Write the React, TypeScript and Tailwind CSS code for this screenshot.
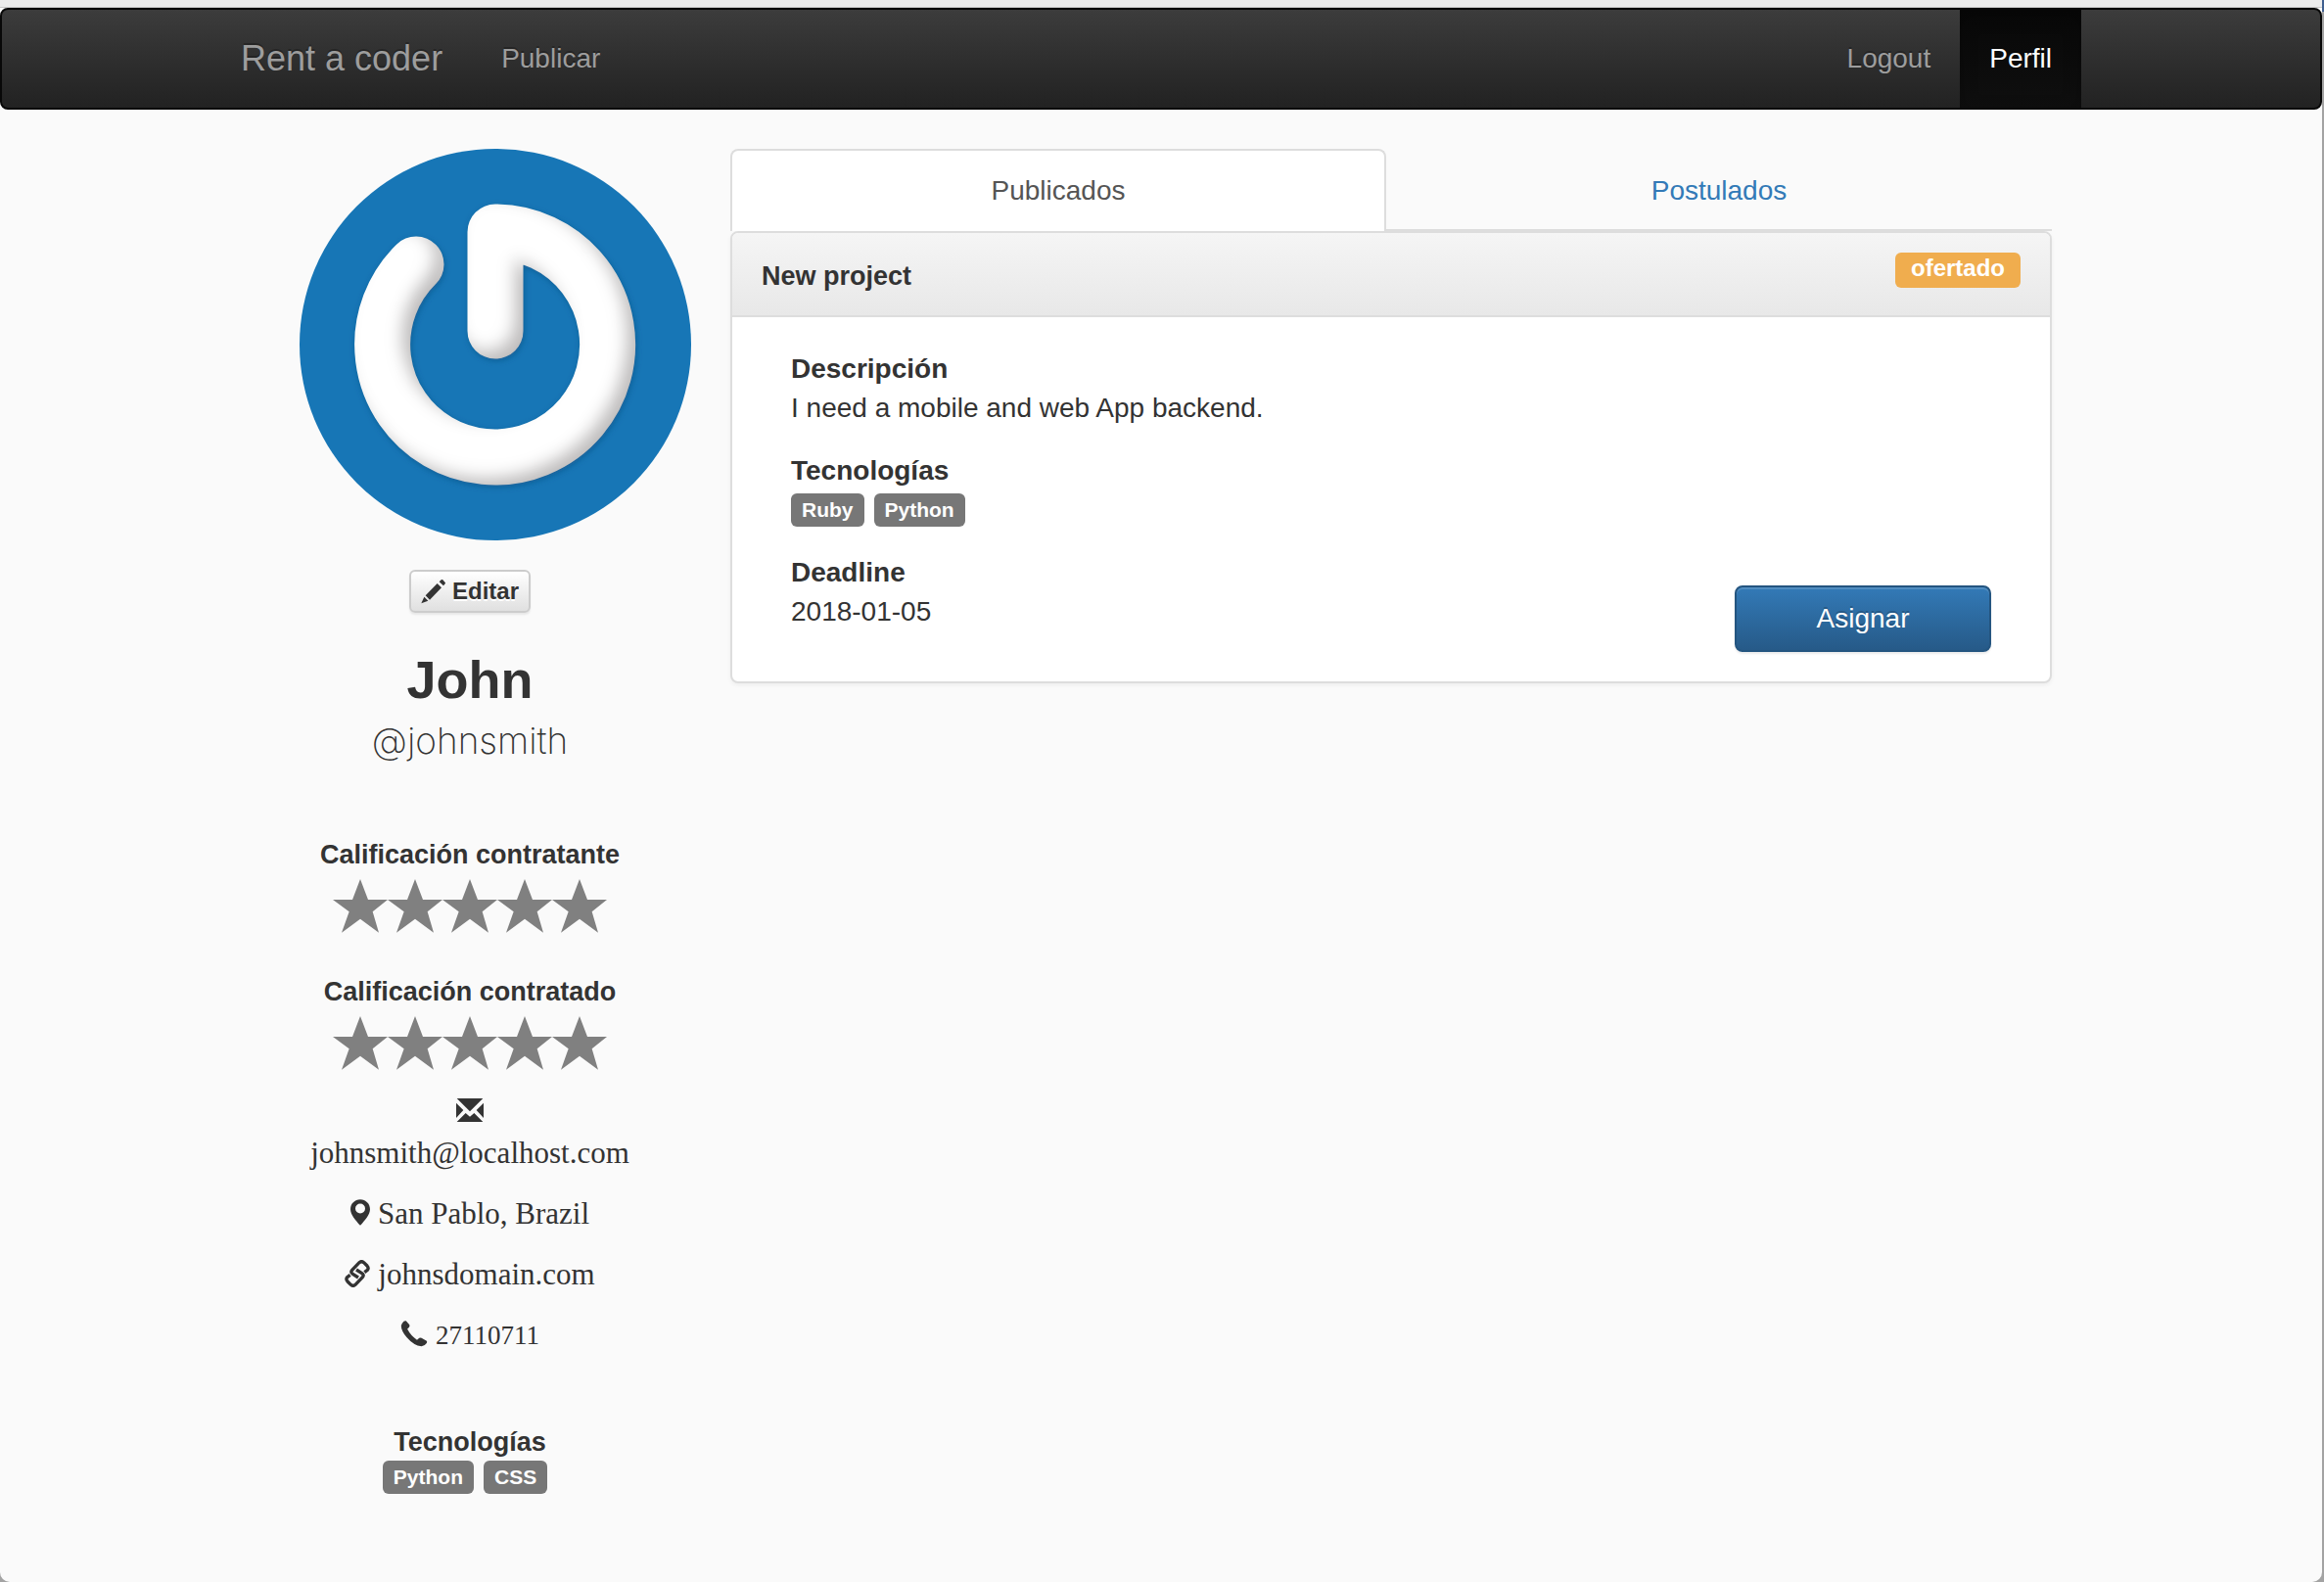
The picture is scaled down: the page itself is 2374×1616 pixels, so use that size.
import type { ReactNode } from 'react';

function Avatar() {
  const power = 'M200 186V85A115 115 0 1 1 119 118';
  return (
    <svg viewBox="0 0 400 400" className="ml-[30px] block w-[400px] max-w-none rounded-full" role="img" aria-label="John">
      <defs>
        <filter id="soft" x="-20%" y="-20%" width="140%" height="140%">
          <feGaussianBlur stdDeviation="10" />
        </filter>
        <filter id="glow" x="-20%" y="-20%" width="140%" height="140%">
          <feGaussianBlur stdDeviation="3" />
        </filter>
        <mask id="powerMask" maskUnits="userSpaceOnUse" x="0" y="0" width="400" height="400">
          <path d={power} fill="none" stroke="#fff" strokeWidth="57" strokeLinecap="round" strokeLinejoin="round" />
        </mask>
      </defs>
      <rect width="400" height="400" fill="#1776b6" />
      <g fill="none" strokeLinecap="round" strokeLinejoin="round">
        <path d={power} stroke="#0f4f80" strokeOpacity="0.6" strokeWidth="57" filter="url(#glow)" transform="translate(1 2)" />
        <g mask="url(#powerMask)">
          <rect width="400" height="400" fill="#bcbaba" />
          <path d={power} stroke="#fff" strokeWidth="60" filter="url(#soft)" transform="translate(-11 -9)" />
          <path d={power} stroke="#fff" strokeWidth="30" filter="url(#soft)" transform="translate(-7 -6)" />
        </g>
      </g>
    </svg>
  );
}

function Pencil() {
  return (
    <svg viewBox="0 0 75 75" className="h-[25px] w-[25px]" fill="currentColor" aria-hidden="true">
      <path d="M56 7L62 1Q64-1 67 1L74 9Q76 11 74 13L69 19ZM50 12L63 25L27 62L14 49ZM10 53L22 65L1 73Z" />
    </svg>
  );
}

function Envelope() {
  return (
    <svg viewBox="0 0 84 72" className="h-6 w-7" fill="currentColor" aria-hidden="true">
      <path d="M2 0H82L42 40ZM2 72L29 45L42 56L55 45L82 72ZM0 14L22 36L0 60ZM84 14L62 36L84 60Z" />
    </svg>
  );
}

function Pin() {
  return (
    <svg viewBox="0 0 60 80" className="h-[27px] w-5" fill="currentColor" aria-hidden="true">
      <path fillRule="evenodd" d="M30 0C47 0 60 13 60 30C60 47 44 64 30 80C16 64 0 47 0 30C0 13 13 0 30 0ZM30 13A15 15 0 1 0 30 43A15 15 0 1 0 30 13Z" />
    </svg>
  );
}

function Chain() {
  return (
    <svg viewBox="0 0 76 84" className="h-7 w-[26px]" fill="none" stroke="currentColor" strokeWidth="10" aria-hidden="true">
      <path d="M41 54L24 43Q16 38 22 31L44 8Q51 2 58 8L68 18Q74 25 69 31L60 38" />
      <path d="M35 30L52 41Q60 46 54 53L32 76Q25 82 18 76L8 66Q2 59 7 53L16 46" />
    </svg>
  );
}

function Phone() {
  return (
    <svg viewBox="0 0 82 82" className="h-[27px] w-7" fill="currentColor" aria-hidden="true">
      <path d="M4 8Q10-1 16 1L26 12Q29 17 25 21L20 26Q30 46 50 60L57 54Q60 52 64 54L80 63Q82 66 80 70Q74 79 64 80Q40 78 18 52Q0 30 1 15Z" />
    </svg>
  );
}

function Stars({ label }: { label: string }) {
  return (
    <div className="flex justify-center pt-[6px]" role="img" aria-label={label}>
      {[0, 1, 2, 3, 4].map((n) => (
        <svg key={n} viewBox="0 0 168 168" className="h-14 w-14" fill="#808080">
          <path d="M84 0L108 63H168L122 100L141 164L84 122L27 164L50 100L0 63H60Z" />
        </svg>
      ))}
    </div>
  );
}

function Tag({ children }: { children: ReactNode }) {
  return (
    <span className="mr-[10px] inline-block h-[34px] rounded-md bg-[#777] px-[11px] text-[21px] leading-[34px] font-bold text-white">
      {children}
    </span>
  );
}

function Contact({ icon, children }: { icon: ReactNode; children: ReactNode }) {
  return (
    <div className="flex justify-center gap-2">
      <span className="pt-[5px]">{icon}</span>
      {children}
    </div>
  );
}

const labelText = 'text-[27px] leading-[38px] font-bold';

function Profile() {
  return (
    <aside className="flex flex-col pr-8 pl-[30px] text-center">
      <Avatar />
      <button
        type="button"
        className="mt-[30px] flex h-11 items-center gap-[7px] self-center rounded-md border-2 border-[#ccc] bg-linear-to-b from-white to-[#e0e0e0] px-[10px] text-2xl font-bold shadow-[0_2px_2px_rgba(0,0,0,0.08)] [text-shadow:0_2px_0_#fff]"
      >
        <Pencil />
        Editar
      </button>
      <h1 className="mt-[38px] text-[54px] leading-[60px] font-bold">John</h1>
      <p className="mt-2 font-['Inter',sans-serif] text-[37px] leading-[50px] font-extralight">@johnsmith</p>

      <h2 className={`mt-[72px] ${labelText}`}>Calificación contratante</h2>
      <Stars label="Calificación contratante" />
      <h2 className={`mt-10 ${labelText}`}>Calificación contratado</h2>
      <Stars label="Calificación contratado" />

      <address className="mt-7 flex flex-col gap-[22px] font-['Liberation_Serif',serif] text-[31px] leading-10 not-italic">
        <div className="flex flex-col items-center gap-3">
          <Envelope />
          <span>johnsmith@localhost.com</span>
        </div>
        <Contact icon={<Pin />}>
          <span>San Pablo, Brazil</span>
        </Contact>
        <Contact icon={<Chain />}>
          <a href="#website">johnsdomain.com</a>
        </Contact>
        <Contact icon={<Phone />}>
          <span className="text-[27px]">27110711</span>
        </Contact>
      </address>

      <h2 className={`mt-[70px] ${labelText}`}>Tecnologías</h2>
      <div className="flex justify-center">
        <Tag>Python</Tag>
        <Tag>CSS</Tag>
      </div>
    </aside>
  );
}

function Projects() {
  return (
    <main className="px-[30px]">
      <nav className="grid grid-cols-[67fr_68fr] text-center">
        <a href="#publicados" className="rounded-t-lg border-2 border-b-0 border-[#ddd] bg-white pt-[21px] pb-[21px] text-[#555]">
          Publicados
        </a>
        <a href="#postulados" className="border-b-2 border-[#ddd] pt-[23px] pb-[19px] text-[#337ab7]">
          Postulados
        </a>
      </nav>
      <section className="rounded-lg border-2 border-[#ddd] bg-white shadow-[0_2px_4px_rgba(0,0,0,0.05)]">
        <header className="flex h-[86px] items-start justify-between rounded-t-md border-b-2 border-[#ddd] bg-linear-to-b from-[#f5f5f5] to-[#e8e8e8] px-[30px] pt-5">
          <h2 className="text-[27px] leading-[48px] font-bold">New project</h2>
          <span className="h-9 rounded-md bg-[#f0ad4e] px-4 text-2xl font-bold text-white">ofertado</span>
        </header>
        <div className="flex items-end justify-between px-[60px] pt-[33px] pb-[30px]">
          <dl className="flex flex-col gap-6 pb-[21px]">
            <div>
              <dt className="font-bold">Descripción</dt>
              <dd>I need a mobile and web App backend.</dd>
            </div>
            <div>
              <dt className="font-bold">Tecnologías</dt>
              <dd className="flex h-10 items-center">
                <Tag>Ruby</Tag>
                <Tag>Python</Tag>
              </dd>
            </div>
            <div>
              <dt className="font-bold">Deadline</dt>
              <dd>2018-01-05</dd>
            </div>
          </dl>
          <button
            type="button"
            className="h-[68px] w-[262px] rounded-lg border-2 border-[#245580] bg-linear-to-b from-[#337ab7] to-[#265a88] text-white shadow-[inset_0_2px_0_rgba(255,255,255,0.15),0_2px_2px_rgba(0,0,0,0.075)] [text-shadow:0_-2px_0_rgba(0,0,0,0.2)]"
          >
            Asignar
          </button>
        </div>
      </section>
    </main>
  );
}

export default function App() {
  return (
    <div className="flex min-h-screen bg-[#a3a3a3] font-['Liberation_Sans',Arial,sans-serif] text-[28px] leading-10 text-[#333]">
      <div className="flex-1 rounded-b-[10px] bg-[#fafafa]">
        <div className="h-2 border-b border-[#c8c8c8] bg-[#ececec]" />
        <div className="rounded-lg border-2 border-[#080808] bg-linear-to-b from-[#3c3c3c] to-[#222]">
          <div className="mx-auto flex h-[100px] max-w-[1880px] items-stretch text-[#9d9d9d] [text-shadow:0_-2px_0_rgba(0,0,0,0.25)]">
            <a href="#inicio" className="flex items-center pr-[30px] text-4xl">
              Rent a coder
            </a>
            <a href="#publicar" className="flex items-center px-[30px]">
              Publicar
            </a>
            <a href="#logout" className="ml-auto flex items-center px-[30px]">
              Logout
            </a>
            <a
              href="#perfil"
              className="flex items-center bg-linear-to-b from-[#080808] to-[#0f0f0f] px-[30px] text-white shadow-[inset_0_6px_18px_rgba(0,0,0,0.25)]"
            >
              Perfil
            </a>
          </div>
        </div>
        <div className="mx-auto grid max-w-[1880px] grid-cols-4 pt-10 pb-[90px]">
          <Profile />
          <div className="col-span-3">
            <Projects />
          </div>
        </div>
      </div>
      <div className="w-[2px]">
        <div className="h-3 bg-[#3f5f8f]" />
      </div>
    </div>
  );
}
